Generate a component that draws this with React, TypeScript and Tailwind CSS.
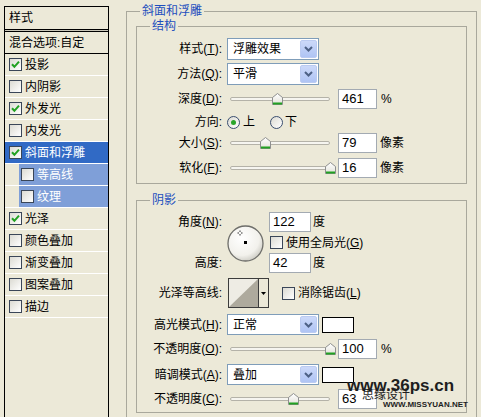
import React from 'react';

const FONT = "font-['Liberation_Sans','Noto_Sans_CJK_SC',sans-serif]";

const Check = ({ checked, className = '' }: { checked?: boolean; className?: string }) => (
  <span
    className={`w-[13px] h-[13px] shrink-0 border border-[#3A4658] bg-gradient-to-br from-[#DCDBD3] to-white flex items-center justify-center ${className}`}
  >
    {checked && (
      <svg width="9" height="9" viewBox="0 0 9 9">
        <path d="M1 4.2 L3.4 6.8 L8 1.6" stroke="#21A121" strokeWidth="2" fill="none" />
      </svg>
    )}
  </span>
);

const Radio = ({ on, className = '' }: { on?: boolean; className?: string }) => (
  <span
    className={`w-[13px] h-[13px] shrink-0 rounded-full border border-[#3A4E70] bg-gradient-to-br from-[#DCDBD3] to-white flex items-center justify-center ${className}`}
  >
    {on && <span className="w-[5px] h-[5px] rounded-full bg-[#2AA52A]" />}
  </span>
);

const Label = ({ children }: { children: React.ReactNode }) => (
  <span className="w-[85px] shrink-0 text-right whitespace-nowrap">{children}</span>
);

const Select = ({ value }: { value: string }) => (
  <div className="ml-[5px] w-[92px] h-full border border-[#7F9DB9] bg-white flex items-center">
    <span className="flex-1 pl-[5px]">{value}</span>
    <span className="w-[17px] h-[calc(100%-2px)] mr-[1px] rounded-[2px] border border-[#BBCBF1] bg-gradient-to-b from-[#CCD9F9] to-[#AFC4F4] flex items-center justify-center">
      <svg width="9" height="6" viewBox="0 0 9 6">
        <path d="M1 1 L4.5 4.5 L8 1" stroke="#4D6185" strokeWidth="2" fill="none" />
      </svg>
    </span>
  </div>
);

const Thumb = () => (
  <svg width="11" height="12" viewBox="0 0 11 12">
    <defs>
      <linearGradient id="tg" x1="0" y1="0" x2="0" y2="1">
        <stop offset="0" stopColor="#FFFFFF" />
        <stop offset="1" stopColor="#E3E2DA" />
      </linearGradient>
    </defs>
    <path d="M0.5 4.5 L5.5 0.5 L10.5 4.5 V11.5 H0.5 Z" fill="url(#tg)" stroke="#8E8F8F" />
    <path d="M1 10.5 H10" stroke="#21A121" strokeWidth="2" />
  </svg>
);

const Slider = ({ pos }: { pos: number }) => (
  <div className="relative ml-[8px] w-[100px] h-[14px] flex items-center shrink-0">
    <div className="w-full h-[4px] rounded-[2px] border border-[#B4B2A8] bg-[#F6F5F0]" />
    <span className="absolute top-[1px] flex" style={{ left: pos - 5 }}>
      <Thumb />
    </span>
  </div>
);

const Num = ({ v, w = 'w-[39px]', className = '' }: { v: string; w?: string; className?: string }) => (
  <div className={`${w} h-full shrink-0 border border-[#A3AAB2] bg-white pl-[3px] text-[13px] leading-[18px] ${className}`}>
    {v}
  </div>
);

const Group = ({ title, className, children }: { title: string; className: string; children: React.ReactNode }) => (
  <div className={`relative border border-[#A9A89C] ${className}`}>
    <span className="absolute left-[13px] -top-[8px] px-[2px] bg-[#ECE9D8] text-[#1D4FBE] leading-[15px]">{title}</span>
    {children}
  </div>
);

const Dial = () => (
  <svg width="37" height="37" viewBox="0 0 37 37" className="ml-[5px] mt-[13px] shrink-0">
    <defs>
      <radialGradient id="dg" cx="0.4" cy="0.35" r="0.7">
        <stop offset="0" stopColor="#FFFFFF" />
        <stop offset="0.7" stopColor="#F2F1EC" />
        <stop offset="1" stopColor="#C9C8C0" />
      </radialGradient>
    </defs>
    <circle cx="18.5" cy="18.5" r="17.5" fill="url(#dg)" stroke="#6E6E6A" strokeWidth="1.3" />
    <rect x="17" y="16" width="3" height="3" fill="#000" />
    <path d="M13 5.5 V7 M13 9 V10.5 M10.5 8 H12 M14 8 H15.5" stroke="#333" strokeWidth="1" />
  </svg>
);

const Contour = () => (
  <div className="ml-[6px] w-[41px] h-full shrink-0 border border-[#3C3C3C] flex">
    <svg width="29" height="28" viewBox="0 0 29 28" className="bg-[#EEECE4]">
      <path d="M0 28 L29 0 L29 28 Z" fill="#AEAA9D" />
    </svg>
    <div className="flex-1 border-l border-[#3C3C3C] flex items-center justify-center">
      <svg width="5" height="3" viewBox="0 0 5 3">
        <path d="M0 0 H5 L2.5 3 Z" fill="#000" />
      </svg>
    </div>
  </div>
);

const Swatch = () => <div className="ml-[3px] w-[32px] h-[16px] border border-black bg-white shrink-0" />;

const items: { name: string; checked?: boolean; selected?: boolean; sub?: boolean }[] = [
  { name: '投影', checked: true },
  { name: '内阴影' },
  { name: '外发光', checked: true },
  { name: '内发光' },
  { name: '斜面和浮雕', checked: true, selected: true },
  { name: '等高线', sub: true },
  { name: '纹理', sub: true },
  { name: '光泽', checked: true },
  { name: '颜色叠加' },
  { name: '渐变叠加' },
  { name: '图案叠加' },
  { name: '描边' },
];

export default function App() {
  return (
    <div className={`relative w-[481px] h-[417px] overflow-hidden bg-[#ECE9D8] flex text-[12px] text-black ${FONT}`}>
      {/* left style list */}
      <div className="ml-[4px] mt-[6px] w-[105px] h-[430px] shrink-0 border border-black">
        <div className="h-[22px] pl-[4px] flex items-center">样式</div>
        <div className="h-[3px] border-y border-black bg-[#C9C6B8]" />
        <div className="h-[22px] pl-[4px] flex items-center border-b border-black">混合选项:自定</div>
        {items.map((it) => (
          <div key={it.name} className={`h-[22px] border-b border-white flex ${it.sub ? 'pl-[14px]' : ''}`}>
            <div
              className={`flex-1 flex items-center gap-[3px] ${
                it.selected ? 'bg-[#316AC5] text-white pl-[4px]' : it.sub ? 'bg-[#7F9FD8] text-white pl-[2px]' : 'pl-[4px]'
              }`}
            >
              <Check checked={it.checked} />
              <span>{it.name}</span>
            </div>
          </div>
        ))}
      </div>

      {/* right settings */}
      <Group title="斜面和浮雕" className="ml-[17px] mt-[11px] w-[351px] h-[430px] shrink-0 px-[9px]">
        <Group title="结构" className="mt-[14px] h-[158px]">
          <div className="pt-[11px] flex flex-col">
            <div className="h-[22px] flex items-center">
              <Label>样式(<u>T</u>):</Label>
              <Select value="浮雕效果" />
            </div>
            <div className="mt-[3px] h-[22px] flex items-center">
              <Label>方法(<u>Q</u>):</Label>
              <Select value="平滑" />
            </div>
            <div className="mt-[4px] h-[20px] flex items-center">
              <Label>深度(<u>D</u>):</Label>
              <Slider pos={47} />
              <Num v="461" className="ml-[8px]" />
              <span className="ml-[4px]">%</span>
            </div>
            <div className="mt-[5px] h-[16px] flex items-center">
              <Label>方向:</Label>
              <Radio on className="ml-[5px]" />
              <span className="ml-[3px]">上</span>
              <Radio className="ml-[15px]" />
              <span className="ml-[2px]">下</span>
            </div>
            <div className="mt-[3px] h-[20px] flex items-center">
              <Label>大小(<u>S</u>):</Label>
              <Slider pos={35} />
              <Num v="79" className="ml-[8px]" />
              <span className="ml-[3px]">像素</span>
            </div>
            <div className="mt-[5px] h-[20px] flex items-center">
              <Label>软化(<u>F</u>):</Label>
              <Slider pos={100} />
              <Num v="16" className="ml-[8px]" />
              <span className="ml-[3px]">像素</span>
            </div>
          </div>
        </Group>

        <Group title="阴影" className="mt-[16px] h-[213px]">
          <div className="pt-[11px] flex flex-col">
            <div className="flex">
              <div className="w-[85px] shrink-0 flex flex-col">
                <div className="h-[20px] flex items-center justify-end whitespace-nowrap">角度(<u>N</u>):</div>
                <div className="h-[21px]" />
                <div className="h-[20px] flex items-center justify-end">高度:</div>
              </div>
              <Dial />
              <div className="ml-[5px] flex flex-col">
                <div className="h-[20px] flex items-center">
                  <Num v="122" w="w-[42px]" />
                  <span className="ml-[2px]">度</span>
                </div>
                <div className="h-[21px] flex items-center">
                  <Check className="ml-[1px]" />
                  <span className="ml-[3px] whitespace-nowrap">使用全局光(<u>G</u>)</span>
                </div>
                <div className="h-[20px] flex items-center">
                  <Num v="42" w="w-[42px]" />
                  <span className="ml-[2px]">度</span>
                </div>
              </div>
            </div>
            <div className="mt-[5px] h-[30px] flex items-center">
              <Label>光泽等高线:</Label>
              <Contour />
              <Check className="ml-[13px]" />
              <span className="ml-[3px]">消除锯齿(<u>L</u>)</span>
            </div>
            <div className="mt-[6px] h-[21px] flex items-center">
              <Label>高光模式(<u>H</u>):</Label>
              <Select value="正常" />
              <Swatch />
            </div>
            <div className="mt-[4px] h-[20px] flex items-center">
              <Label>不透明度(<u>O</u>):</Label>
              <Slider pos={100} />
              <Num v="100" className="ml-[8px]" />
              <span className="ml-[4px]">%</span>
            </div>
            <div className="mt-[5px] h-[21px] flex items-center">
              <Label>暗调模式(<u>A</u>):</Label>
              <Select value="叠加" />
              <Swatch />
            </div>
            <div className="mt-[4px] h-[20px] flex items-center">
              <Label>不透明度(<u>C</u>):</Label>
              <Slider pos={63} />
              <Num v="63" className="ml-[8px]" />
            </div>
          </div>
        </Group>
      </Group>

      {/* watermark */}
      <span className="absolute left-[347px] top-[378px] text-[17px] leading-[16px] font-bold text-[#1E1E1E] whitespace-nowrap">
        www.36ps.cn
      </span>
      <span className="absolute left-[362px] top-[389px] text-[12px] leading-[12px] text-[#1E1E1E] whitespace-nowrap">
        思缘设计
      </span>
      <span className="absolute left-[383px] top-[401px] text-[8px] leading-[8px] font-bold text-[#1E1E1E] whitespace-nowrap">
        WWW.MISSYUAN.NET
      </span>
    </div>
  );
}
